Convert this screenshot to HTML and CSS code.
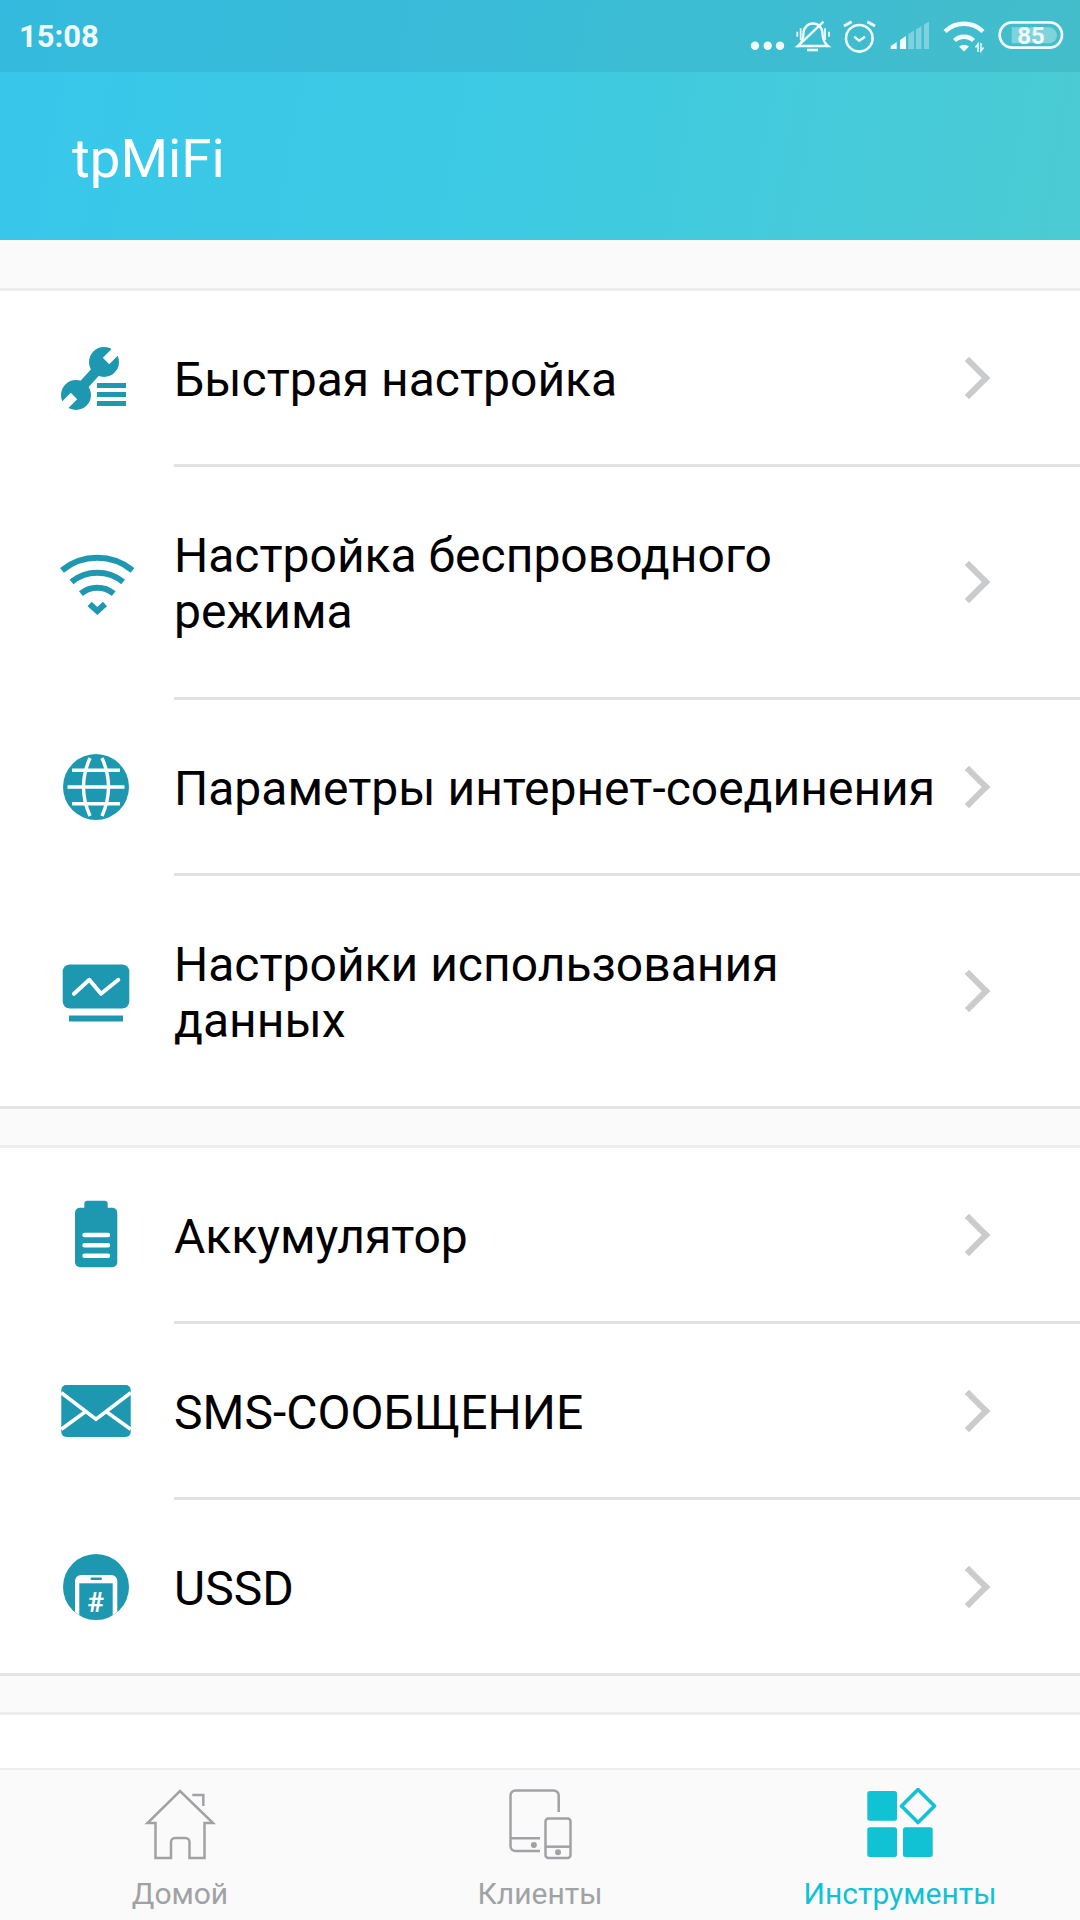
FILE: index.html
```html
<!DOCTYPE html>
<html>
<head>
    <title>tpMiFi</title>
    <meta charset="utf-8">
    <link rel="stylesheet" href="styles.css">
</head>
<body>
<div class="screen">
    <div class="top">
        <div class="status">
            <span class="time">15:08</span>
            <svg class="status-icons" width="360" height="72" viewBox="0 0 360 72">
                <g fill="#f2fbfd">
                    <circle cx="35" cy="45.700" r="4.200"/><circle cx="47.700" cy="45.700" r="4.200"/><circle cx="60" cy="45.700" r="4.200"/>
                </g>
                <g fill="none" stroke="#f2fbfd" stroke-width="2.400">
                    <path d="M78 46C83 42 83.500 38 83.500 33a9.500 9.500 0 0 1 19 0C102.500 38 103 42 108 46Z"/>
                    <path d="M87 50H98" stroke-width="2.600"/>
                    <path d="M77 47L103.500 21.700"/>
                    <path d="M77.300 31.700v5M80.700 28.300v11.700M105 28.300v11.700M109 31.700v5" stroke-width="1.800"/>
                    <circle cx="139.300" cy="38.300" r="13.300" stroke-width="2.600"/>
                    <path d="M134.300 36.700L139.300 40.700L145 36.700"/>
                    <path d="M124 26L131.700 21.700M147.300 21.700L155 26" stroke-width="3"/>
                    <path d="M225 31.500A27 27 0 0 1 263 31.500M234.500 40.500A14 14 0 0 1 253.500 40.500" stroke-width="4.400"/>
                </g>
                <path d="M239 46.500Q244 43 249 46.500L244 51.500Z" fill="#f2fbfd"/>
                <path d="M258 52V44L255.500 47.500M261 43V51L263.500 47.500" fill="none" stroke="#f2fbfd" stroke-width="1.500"/>
                <g fill="#f2fbfd">
                    <path d="M170.700 49V46L176.700 42V49Z"/>
                    <path d="M180 49V40L186 36V49Z"/>
                    <g opacity=".35">
                        <path d="M188.300 49V34L194 30.500V49Z"/>
                        <path d="M196 49V29.500L201.500 26V49Z"/>
                        <path d="M204 49V24.500L209 21.500V49Z"/>
                    </g>
                </g>
                <rect x="279.700" y="22.300" width="62.300" height="25.400" rx="12.700" fill="none" stroke="#f2fbfd" stroke-width="2.700"/>
                <path d="M291.700 27.300H329a8 8 0 0 1 0 16H291.700Z" fill="#f2fbfd" opacity=".35"/>
            </svg>
            <span class="bat">85</span>
        </div>
        <div class="header">tpMiFi</div>
    </div>

    <div class="main">
        <div class="section">
            <div class="row">
                <div class="icon">
                    <svg width="80" height="80" viewBox="0 0 80 80">
                        <circle cx="48" cy="24" r="15" fill="#1e97b0"/>
                        <circle cx="20" cy="57" r="15" fill="#1e97b0"/>
                        <path d="M45 28L22 53" stroke="#1e97b0" stroke-width="10"/>
                        <path d="M63 10L50 23M5 71L18 58" stroke="#fff" stroke-width="9"/>
                        <path d="M41 47.500h29M41 56.500h29M41 65.500h29" stroke="#1e97b0" stroke-width="5"/>
                    </svg>
                </div>
                <div class="body"><span class="label">Быстрая настройка</span><span class="arrow"></span></div>
            </div>
            <div class="row double">
                <div class="icon">
                    <svg width="80" height="80" viewBox="0 0 80 80" fill="none" stroke="#1e97b0" stroke-width="6">
                        <path d="M6 28.300A56 56 0 0 1 76.500 28.300"/>
                        <path d="M15.500 39.900A41 41 0 0 1 67.100 39.900"/>
                        <path d="M24.900 51.600A26 26 0 0 1 57.700 51.600"/>
                        <path d="M33.600 62L41.300 69L49 62"/>
                    </svg>
                </div>
                <div class="body"><span class="label">Настройка беспроводного режима</span><span class="arrow"></span></div>
            </div>
            <div class="row">
                <div class="icon">
                    <svg width="80" height="80" viewBox="0 0 80 80">
                        <circle cx="40" cy="40" r="33" fill="#1e97b0"/>
                        <g fill="none" stroke="#fff" stroke-width="3.400">
                            <path d="M16 23.300H64M11.500 40H68.500M16 56.700H64"/>
                            <path d="M34 11Q21 40 34 69M46 11Q59 40 46 69"/>
                        </g>
                    </svg>
                </div>
                <div class="body"><span class="label">Параметры интернет-соединения</span><span class="arrow"></span></div>
            </div>
            <div class="row double last">
                <div class="icon">
                    <svg width="80" height="80" viewBox="0 0 80 80">
                        <rect x="6.700" y="13.500" width="66.600" height="44" rx="7" fill="#1e97b0"/>
                        <rect x="13" y="64.500" width="54" height="6" fill="#1e97b0"/>
                        <path d="M18 42.800L33.300 28.800L45 42.800L62.300 28.800" fill="none" stroke="#fff" stroke-width="4" stroke-linecap="round" stroke-linejoin="round"/>
                    </svg>
                </div>
                <div class="body"><span class="label">Настройки использования данных</span><span class="arrow"></span></div>
            </div>
        </div>

        <div class="section">
            <div class="row">
                <div class="icon">
                    <svg width="80" height="80" viewBox="0 0 80 80">
                        <rect x="28.300" y="5.700" width="23.400" height="12" rx="3" fill="#1e97b0"/>
                        <rect x="19" y="12.700" width="42.300" height="59.600" rx="5" fill="#1e97b0"/>
                        <path d="M28.500 40H52M28.500 50.300H52M28.500 60.700H52" stroke="#fff" stroke-width="4.400" stroke-linecap="round"/>
                    </svg>
                </div>
                <div class="body"><span class="label">Аккумулятор</span><span class="arrow"></span></div>
            </div>
            <div class="row">
                <div class="icon">
                    <svg width="80" height="80" viewBox="0 0 80 80">
                        <rect x="5.300" y="14" width="69.400" height="52" rx="5" fill="#1e97b0"/>
                        <path d="M5.300 21.700L40 48.300L74.700 21.700M5.300 58.300L29 41M50.700 41L74.700 58.300" fill="none" stroke="#fff" stroke-width="3.600"/>
                    </svg>
                </div>
                <div class="body"><span class="label">SMS-СООБЩЕНИЕ</span><span class="arrow"></span></div>
            </div>
            <div class="row last">
                <div class="icon">
                    <svg width="80" height="80" viewBox="0 0 80 80">
                        <clipPath id="ussd"><circle cx="40" cy="40" r="33"/></clipPath>
                        <circle cx="40" cy="40" r="33" fill="#1e97b0"/>
                        <g clip-path="url(#ussd)">
                            <rect x="19" y="28" width="42.300" height="60" rx="6" fill="#fff"/>
                            <rect x="23.300" y="36.300" width="33.400" height="50" fill="#1e97b0"/>
                            <rect x="34.500" y="30.500" width="11.500" height="2.400" rx="1.200" fill="#1e97b0"/>
                        </g>
                        <text x="39.700" y="64.500" text-anchor="middle" class="hash">#</text>
                    </svg>
                </div>
                <div class="body"><span class="label">USSD</span><span class="arrow"></span></div>
            </div>
        </div>

        <div class="section open"></div>
    </div>

    <div class="tabs">
        <div class="tab">
            <svg width="80" height="80" viewBox="0 0 80 80" fill="none" stroke="#a0a2a5" stroke-width="2.500">
                <path d="M15.500 70V35H7.500L40 3L73 35H64.500V70H49.500V54a4 4 0 0 0-4-4H35a4 4 0 0 0-4 4V70Z"/>
                <path d="M52.300 7H63.300V18"/>
            </svg>
            <span class="tab-label">Домой</span>
        </div>
        <div class="tab">
            <svg width="80" height="80" viewBox="0 0 80 80" fill="none" stroke="#a0a2a5" stroke-width="2.500">
                <path d="M58.700 24V7.500a5 5 0 0 0-5-5H15.500a5 5 0 0 0-5 5V58a5 5 0 0 0 5 5H40M10.500 50.300H40"/>
                <rect x="45.500" y="30.500" width="25" height="39.500" rx="3"/>
                <path d="M45.500 58.700H70.500"/>
                <circle cx="33.900" cy="57" r="3" fill="#a0a2a5" stroke="none"/>
                <circle cx="58" cy="64.300" r="3" fill="#a0a2a5" stroke="none"/>
            </svg>
            <span class="tab-label">Клиенты</span>
        </div>
        <div class="tab active">
            <svg width="80" height="80" viewBox="0 0 80 80" fill="#10c2d4">
                <rect x="7.300" y="3" width="29.700" height="29.700" rx="2.500"/>
                <rect x="7.300" y="39.300" width="29.700" height="29.700" rx="2.500"/>
                <rect x="43" y="39.300" width="29.700" height="29.700" rx="2.500"/>
                <path d="M58 1.500L74.500 18L58 34.500L41.500 18Z" fill="none" stroke="#10c2d4" stroke-width="3.600" stroke-linejoin="round"/>
            </svg>
            <span class="tab-label">Инструменты</span>
        </div>
    </div>
</div>
</body>
</html>
```

FILE: styles.css
```css
html, body {
    margin: 0;
    padding: 0;
}
body {
    background-color: #ffffff;
    font-family: Roboto, "Noto Sans", sans-serif;
}
.screen {
    width: 1080px;
    height: 1920px;
    display: flex;
    flex-direction: column;
    overflow: hidden;
}
.top {
    background: linear-gradient(100deg, #38c7ec 0%, #3ecae2 50%, #4bcbd3 100%);
}
.status {
    height: 72px;
    display: flex;
    justify-content: space-between;
    align-items: center;
    background-color: rgba(40, 130, 160, 0.18);
    position: relative;
}
.time {
    margin-left: 19px;
    font-size: 31px;
    font-weight: 700;
    color: #eefafd;
}
.status-icons {
    display: block;
}
.bat {
    position: absolute;
    left: 1011px;
    top: 18px;
    width: 40px;
    text-align: center;
    font-size: 24px;
    line-height: 36px;
    font-weight: 700;
    color: #f2fbfd;
}
.header {
    height: 164px;
    padding: 4px 0 0 72px;
    display: flex;
    align-items: center;
    font-size: 54.500px;
    color: #ffffff;
}
.main {
    flex: 1;
    background-color: #fafafa;
    padding-top: 48px;
    display: flex;
    flex-direction: column;
    gap: 36px;
}
.section {
    background-color: #ffffff;
    border-top: 3px solid #ededed;
    border-bottom: 3px solid #e5e5e5;
}
.section.open {
    flex: 1;
    border-bottom: 0;
}
.row {
    display: flex;
    min-height: 176px;
}
.row.double {
    min-height: 233px;
}
.row.last {
    min-height: 173px;
}
.row.double.last {
    min-height: 230px;
}
.icon {
    width: 174px;
    flex-shrink: 0;
    display: flex;
    align-items: center;
    padding: 0 0 3px 56px;
    box-sizing: border-box;
}
.row.last .icon {
    padding-bottom: 0;
}
.icon svg {
    display: block;
}
.hash {
    font-family: Roboto, sans-serif;
    font-size: 28px;
    font-weight: 700;
    fill: #ffffff;
}
.body {
    flex: 1;
    display: flex;
    align-items: center;
    border-bottom: 3px solid #e2e2e2;
    padding-right: 96px;
}
.row.last .body {
    border-bottom: 0;
}
.label {
    flex: 1;
    padding-top: 4px;
    font-size: 48px;
    line-height: 56px;
    color: #000000;
}
.arrow {
    width: 24px;
    height: 24px;
    border-top: 6px solid #c9cbcd;
    border-right: 6px solid #c9cbcd;
    transform: rotate(45deg);
    flex-shrink: 0;
}
.tabs {
    height: 152px;
    box-sizing: border-box;
    display: flex;
    background-color: #fafafa;
    border-top: 2px solid #eeeeee;
}
.tab {
    flex: 1;
    display: flex;
    flex-direction: column;
    align-items: center;
    padding-top: 18px;
}
.tab svg {
    display: block;
}
.tab-label {
    margin-top: 6px;
    font-size: 30px;
    line-height: 40px;
    color: #a0a2a5;
}
.tab.active .tab-label {
    color: #10c2d4;
}
```
